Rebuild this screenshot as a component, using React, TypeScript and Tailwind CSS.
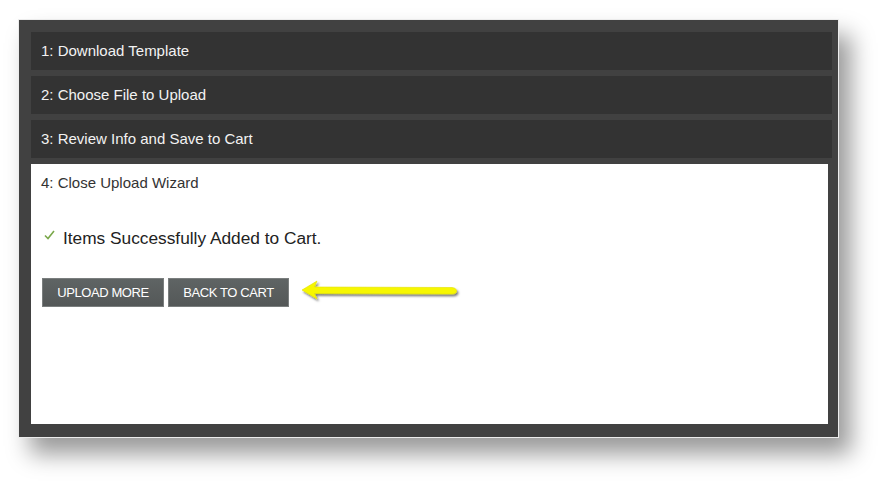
export default function App() {
  const steps = ["1: Download Template", "2: Choose File to Upload", "3: Review Info and Save to Cart"];

  return (
    <div className="w-[884px] h-[481px] bg-white pl-[18px] pt-[19px] overflow-hidden" style={{ fontFamily: '"Liberation Sans", Arial, sans-serif' }}>
      <div className="w-[821px] h-[419px] bg-[#414141] border border-[#ececec] pl-[12px] pr-[6px] pt-[12px] pb-[13px] flex flex-col gap-[6px] shadow-[12px_16px_22px_rgba(0,0,0,0.4)]">
        {steps.map((s) => (
          <div key={s} className="h-[38px] bg-[#333333] flex items-center px-[10px] text-[15px] text-[#f2f2f2]">
            {s}
          </div>
        ))}

        {/* step 4, open */}
        <div className="flex-1 bg-white mr-[4px] px-[10px] pt-[10px]">
          <div className="text-[15px] text-[#333] leading-[18px]">4: Close Upload Wizard</div>

          <div className="flex items-center mt-[36px] pl-[3px] h-[20px]">
            <svg width="11" height="10" viewBox="0 0 11 10" className="mr-[8px] -mt-[6px]">
              <path d="M1 5.5 L4 8.5 L10 1" fill="none" stroke="#7aa84a" strokeWidth="1.6" />
            </svg>
            <span className="text-[17.3px] leading-[20px] text-[#222]">Items Successfully Added to Cart.</span>
          </div>

          <div className="flex items-center gap-[4px] mt-[30px] pl-[1px]">
            <button className="h-[29px] w-[122px] bg-gradient-to-b from-[#5f6464] to-[#545858] border border-[#7a7e7e] text-white text-[13px] tracking-[-0.4px]">
              UPLOAD MORE
            </button>
            <button className="h-[29px] w-[121px] bg-gradient-to-b from-[#5f6464] to-[#545858] border border-[#7a7e7e] text-white text-[13px] tracking-[-0.4px]">
              BACK TO CART
            </button>
            <svg width="166" height="28" viewBox="0 0 166 28" className="ml-[6px] -mt-[1px]">
              <defs>
                <filter id="sh" x="-10%" y="-50%" width="120%" height="200%">
                  <feDropShadow dx="1.5" dy="2" stdDeviation="1" floodColor="#000" floodOpacity="0.55" />
                </filter>
              </defs>
              <g filter="url(#sh)">
                <path d="M3 12 L18 3 L15.5 9 L153 9.5 Q157.5 10 157.5 13 Q157.5 16 153 16 L15.5 15.5 L18 21 Z" fill="#f7f700" stroke="#e2e200" strokeWidth="0.6" strokeLinejoin="round" />
              </g>
            </svg>
          </div>
        </div>
      </div>
    </div>
  );
}
